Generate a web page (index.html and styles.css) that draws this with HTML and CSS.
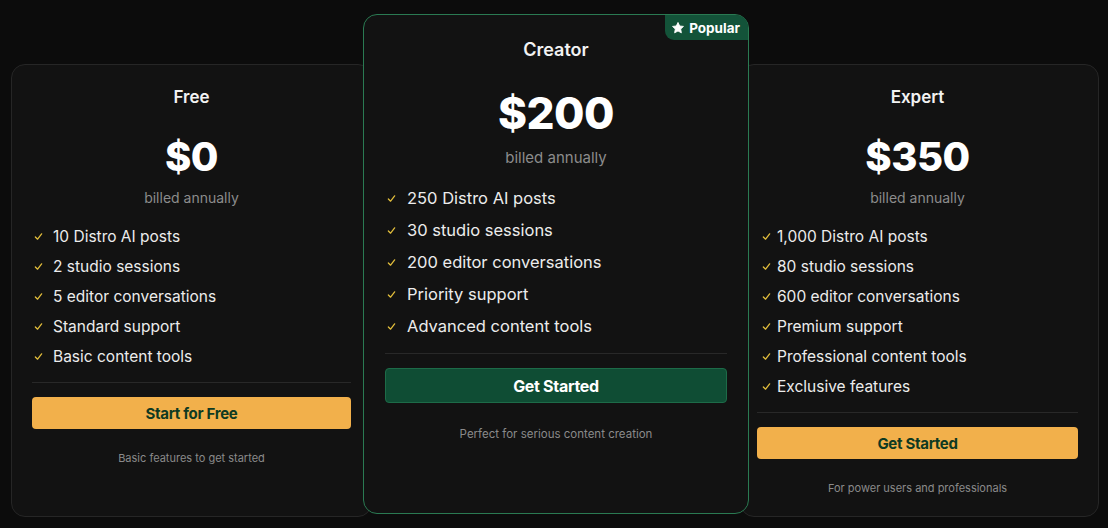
FILE: index.html
```html
<!DOCTYPE html>
<html>
<head>
<meta charset="utf-8">
<link rel="stylesheet" href="styles.css">
</head>
<body>
<div class="plans">
  <div class="card side free">
    <h3 class="name">Free</h3>
    <div class="price">$0</div>
    <div class="billed">billed annually</div>
    <ul class="features">
      <li><svg class="chk" viewBox="0 0 10 10"><polyline points="1.5,5.5 4,8 8.5,2"/></svg>10 Distro AI posts</li>
      <li><svg class="chk" viewBox="0 0 10 10"><polyline points="1.5,5.5 4,8 8.5,2"/></svg>2 studio sessions</li>
      <li><svg class="chk" viewBox="0 0 10 10"><polyline points="1.5,5.5 4,8 8.5,2"/></svg>5 editor conversations</li>
      <li><svg class="chk" viewBox="0 0 10 10"><polyline points="1.5,5.5 4,8 8.5,2"/></svg>Standard support</li>
      <li><svg class="chk" viewBox="0 0 10 10"><polyline points="1.5,5.5 4,8 8.5,2"/></svg>Basic content tools</li>
    </ul>
    <div class="divider"></div>
    <button class="btn gold">Start for Free</button>
    <p class="note">Basic features to get started</p>
  </div>

  <div class="card featured">
    <div class="badge"><svg class="star" viewBox="0 0 24 24"><path d="M12 2.5l2.9 6 6.5.8-4.8 4.5 1.2 6.5L12 17.1l-5.8 3.2 1.2-6.5L2.6 9.3l6.5-.8z"/></svg>Popular</div>
    <h3 class="name">Creator</h3>
    <div class="price">$200</div>
    <div class="billed">billed annually</div>
    <ul class="features">
      <li><svg class="chk" viewBox="0 0 10 10"><polyline points="1.5,5.5 4,8 8.5,2"/></svg>250 Distro AI posts</li>
      <li><svg class="chk" viewBox="0 0 10 10"><polyline points="1.5,5.5 4,8 8.5,2"/></svg>30 studio sessions</li>
      <li><svg class="chk" viewBox="0 0 10 10"><polyline points="1.5,5.5 4,8 8.5,2"/></svg>200 editor conversations</li>
      <li><svg class="chk" viewBox="0 0 10 10"><polyline points="1.5,5.5 4,8 8.5,2"/></svg>Priority support</li>
      <li><svg class="chk" viewBox="0 0 10 10"><polyline points="1.5,5.5 4,8 8.5,2"/></svg>Advanced content tools</li>
    </ul>
    <div class="divider"></div>
    <button class="btn green">Get Started</button>
    <p class="note">Perfect for serious content creation</p>
  </div>

  <div class="card side expert">
    <h3 class="name">Expert</h3>
    <div class="price">$350</div>
    <div class="billed">billed annually</div>
    <ul class="features">
      <li><svg class="chk" viewBox="0 0 10 10"><polyline points="1.5,5.5 4,8 8.5,2"/></svg>1,000 Distro AI posts</li>
      <li><svg class="chk" viewBox="0 0 10 10"><polyline points="1.5,5.5 4,8 8.5,2"/></svg>80 studio sessions</li>
      <li><svg class="chk" viewBox="0 0 10 10"><polyline points="1.5,5.5 4,8 8.5,2"/></svg>600 editor conversations</li>
      <li><svg class="chk" viewBox="0 0 10 10"><polyline points="1.5,5.5 4,8 8.5,2"/></svg>Premium support</li>
      <li><svg class="chk" viewBox="0 0 10 10"><polyline points="1.5,5.5 4,8 8.5,2"/></svg>Professional content tools</li>
      <li><svg class="chk" viewBox="0 0 10 10"><polyline points="1.5,5.5 4,8 8.5,2"/></svg>Exclusive features</li>
    </ul>
    <div class="divider"></div>
    <button class="btn gold">Get Started</button>
    <p class="note">For power users and professionals</p>
  </div>
</div>
</body>
</html>
```
FILE: styles.css
```css
* { box-sizing: border-box; }
html, body { margin: 0; padding: 0; }
body {
  background: #0c0c0c;
  font-family: "Inter", "Noto Sans", sans-serif;
  color: #ececec;
  width: 1108px;
  height: 528px;
  overflow: hidden;
}
.plans {
  display: flex;
  align-items: flex-start;
  padding: 14px 9px 0 11px;
}
.card {
  background: #121212;
  border-radius: 14px;
  display: flex;
  flex-direction: column;
  align-items: center;
}
.side {
  margin-top: 50px;
  height: 453px;
  border: 1px solid #262626;
  padding: 0 20px;
}
.free { width: 361px; }
.expert { width: 359px; padding-left: 16px; }
.featured {
  position: relative;
  z-index: 2;
  width: 386px;
  height: 500px;
  margin: 0 -9px;
  border: 1.5px solid #2a7a52;
  padding: 0 21px;
}
.badge {
  position: absolute;
  top: 0;
  right: 0;
  height: 25px;
  padding: 0 8px 0 6px;
  background: #135339;
  border-radius: 0 12px 0 9px;
  display: flex;
  align-items: center;
  gap: 4px;
  font-weight: 700;
  font-size: 13.5px;
  color: #fff;
}
.star { width: 14px; height: 14px; fill: #fff; stroke: #fff; stroke-width: 1.5; stroke-linejoin: round; }
.name {
  margin: 0;
  font-size: 17px;
  font-weight: 600;
  line-height: 20px;
  margin-top: 22px;
  color: #f2f2f2;
}
.featured .name { font-size: 18px; margin-top: 25px; }
.price {
  font-size: 40px;
  font-weight: 800;
  line-height: 48px;
  margin-top: 26px;
  color: #fff;
  letter-spacing: -0.5px;
}
.featured .price { font-size: 44px; margin-top: 27px; line-height: 52px; }
.billed {
  font-size: 14px;
  color: #8c8c8c;
  line-height: 18px;
  margin-top: 8px;
}
.featured .billed { font-size: 15px; margin-top: 10px; }
.features {
  list-style: none;
  margin: 14px 0 0 0;
  padding: 0;
  align-self: stretch;
}
.features li {
  display: flex;
  align-items: center;
  height: 30px;
  font-size: 15.5px;
  color: #ececec;
}
.featured .features { margin-top: 15px; }
.featured .features li { height: 32px; font-size: 16.5px; }
.chk {
  width: 9px;
  height: 9px;
  margin: 0 10px 0 2px;
  fill: none;
  stroke: #e3bf3c;
  stroke-width: 1.4;
  stroke-linecap: round;
  stroke-linejoin: round;
  flex: none;
}
.featured .chk { margin-right: 11px; }
.expert .chk { margin-left: 5px; margin-right: 6px; }
.divider {
  align-self: stretch;
  height: 1px;
  background: #282828;
  margin-top: 11px;
}
.featured .divider { margin-top: 11px; }
.btn {
  align-self: stretch;
  height: 32px;
  margin-top: 14px;
  border-radius: 4px;
  border: none;
  font-family: inherit;
  font-size: 15px;
  font-weight: 700;
  letter-spacing: -0.3px;
}
.gold { background: #f2b04b; color: #0f3a22; }
.green {
  background: #0f4d34;
  color: #fff;
  border: 1px solid #1d6b48;
  height: 35px;
  margin-top: 14px;
  font-size: 16px;
}
.note {
  margin: 22px 0 0;
  font-size: 11px;
  color: #8a8a8a;
}
.featured .note { margin-top: 24px; font-size: 11.5px; }
```
